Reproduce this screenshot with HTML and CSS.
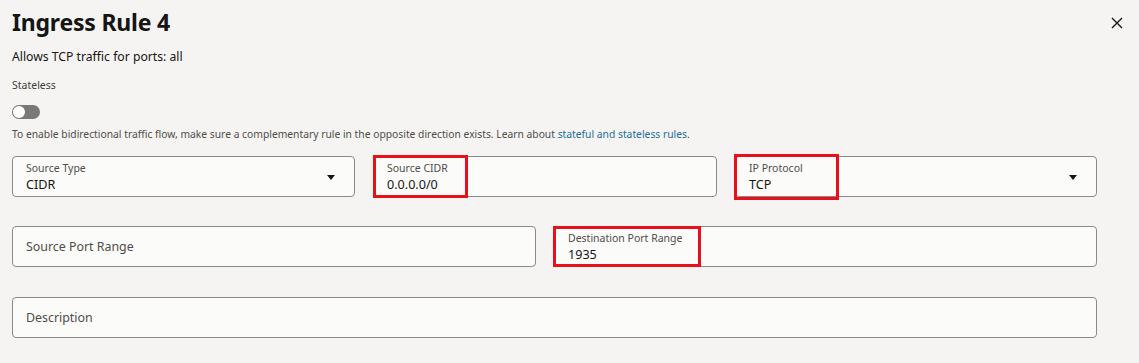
FILE: index.html
```
<!DOCTYPE html>
<html lang="en">
<head>
  <meta charset="UTF-8" />
  <title>Ingress Rule 4</title>
  <link rel="stylesheet" href="styles.css">
</head>
<body>

<div class="panel">
  <div class="panel-head">
    <h1>Ingress Rule 4</h1>
    <button class="close" title="Close">
      <svg width="12" height="12" viewBox="0 0 12 12"><path d="M1 1L11 11M11 1L1 11" stroke="#161513" stroke-width="1.4" fill="none"/></svg>
    </button>
  </div>

  <p class="summary">Allows TCP traffic for ports: all</p>

  <div class="label">Stateless</div>
  <div class="toggle"><span class="knob"></span></div>
  <p class="help">To enable bidirectional traffic flow, make sure a complementary rule in the opposite direction exists. Learn about <a href="#">stateful and stateless rules</a>.</p>

  <div class="row row-3">
    <div class="field select">
      <div class="f-label">Source Type</div>
      <div class="f-value">CIDR</div>
      <span class="caret"></span>
    </div>
    <div class="field">
      <div class="f-label">Source CIDR</div>
      <div class="f-value">0.0.0.0/0</div>
      <span class="mark mark-cidr"></span>
    </div>
    <div class="field select">
      <div class="f-label">IP Protocol</div>
      <div class="f-value">TCP</div>
      <span class="caret"></span>
      <span class="mark mark-proto"></span>
    </div>
  </div>

  <div class="row row-2">
    <div class="field empty">
      <div class="f-placeholder">Source Port Range</div>
    </div>
    <div class="field">
      <div class="f-label">Destination Port Range</div>
      <div class="f-value">1935</div>
      <span class="mark mark-dest"></span>
    </div>
  </div>

  <div class="row">
    <div class="field empty">
      <div class="f-placeholder">Description</div>
    </div>
  </div>
</div>

</body>
</html>
```

FILE: styles.css
```
body {
  margin:0; background:#f5f4f2; color:#161513;
  font-family: "Noto Sans", "Open Sans", Arial, sans-serif;
}
.panel { padding:0 42px 0 12px; }

.panel-head { display:flex; justify-content:space-between; align-items:flex-start; }
.panel-head h1 {
  margin:0; padding-top:6px;
  font-size:23px; font-weight:700; line-height:32px; letter-spacing:-0.2px;
}
.close {
  background:none; border:none; padding:0; cursor:pointer;
  margin:17px -26px 0 0; width:12px; height:12px; display:flex;
}

.summary { margin:10px 0 0; font-size:12.2px; line-height:18px; }
.label { margin-top:11px; font-size:10.5px; line-height:16px; color:#3d3d3b; }

.toggle {
  margin-top:12px; width:28px; height:14px; border-radius:7px;
  background:#7a7977; position:relative; box-sizing:border-box;
}
.toggle .knob {
  position:absolute; left:1px; top:1px; width:12px; height:12px;
  border-radius:6px; background:#fff;
}

.help { margin:7px 0 0; font-size:10.3px; line-height:16px; color:#4f4d4a; }
.help a { color:#1e6e97; text-decoration:none; }

/* FIELDS */
.row { display:grid; gap:18px; margin-top:14px; }
.row + .row { margin-top:29px; }
.row:last-child { margin-top:30px; }
.row-3 { grid-template-columns:343px 344px 1fr; }
.row-2 { grid-template-columns:524px 1fr; }

.field {
  position:relative; height:41px; box-sizing:border-box;
  border:1px solid #8b8a88; border-radius:4px; background:#fbfbfa;
  padding:4px 13px 0;
}
.f-label { font-size:10.5px; line-height:15px; color:#4f4d4a; }
.f-value { font-size:12.6px; line-height:17px; color:#161513; }
.field.empty { display:flex; align-items:center; padding-top:0; }
.f-placeholder { font-size:12.4px; color:#4f4d4a; }

.caret {
  position:absolute; right:19px; top:18px;
  border-left:4px solid transparent; border-right:4px solid transparent;
  border-top:5px solid #161513;
}

/* annotation boxes */
.mark { position:absolute; border:3px solid #e8101a; pointer-events:none; }
.mark-cidr  { left:-1px; top:-2px; width:89px; height:37px; }
.mark-proto { left:-2px; top:-3px; width:99px; height:40px; }
.mark-dest  { left:-2px; top:-1px; width:142px; height:35px; }
```
